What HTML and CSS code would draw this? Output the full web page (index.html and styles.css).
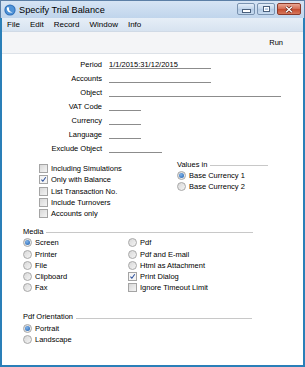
FILE: index.html
```html
<!DOCTYPE html>
<html lang="en">
<head>
    <meta charset="UTF-8">
    <meta name="viewport" content="width=device-width, initial-scale=1.0">
    <title>Specify Trial Balance</title>
    <link rel="stylesheet" href="styles.css">
</head>
<body>
<div class="window">
    <div class="titlebar">
        <svg class="app-icon" width="12" height="12" viewBox="0 0 12 12">
            <circle cx="6" cy="6" r="5.6" fill="#2f6fb8"/>
            <circle cx="6" cy="6" r="4.6" fill="#4f93d8"/>
            <path d="M3 3.2 C2.2 6.4 4.6 9.2 8.6 8.4 C6 8 4.4 6 5.2 3.6 Z" fill="#fff"/>
        </svg>
        <span class="title">Specify Trial Balance</span>
        <div class="caption-buttons">
            <span class="cbtn min"><span class="dash"></span></span>
            <span class="cbtn max"><span class="sq"></span></span>
            <span class="cbtn close">
                <svg width="8" height="7" viewBox="0 0 8 7">
                    <path d="M1 0.8 L7 6.2 M7 0.8 L1 6.2" stroke="#5a1a10" stroke-width="2.6"/>
                    <path d="M1 0.8 L7 6.2 M7 0.8 L1 6.2" stroke="#fff" stroke-width="1.5"/>
                </svg>
            </span>
        </div>
    </div>
    <div class="frame">
        <div class="menubar">
            <span>File</span><span>Edit</span><span>Record</span><span>Window</span><span>Info</span>
        </div>
        <div class="toolbar">
            <span class="run">Run</span>
        </div>
        <div class="content">
            <div class="fields">
                <span class="lbl">Period</span><span class="field w-long">1/1/2015:31/12/2015</span>
                <span class="lbl">Accounts</span><span class="field w-long"></span>
                <span class="lbl">Object</span><span class="field w-wide"></span>
                <span class="lbl">VAT Code</span><span class="field w-short"></span>
                <span class="lbl">Currency</span><span class="field w-short"></span>
                <span class="lbl">Language</span><span class="field w-short"></span>
                <span class="lbl">Exclude Object</span><span class="field w-mid"></span>
            </div>

            <div class="options">
                <div class="checks">
                    <div class="opt"><span class="box"></span>Including Simulations</div>
                    <div class="opt"><span class="box on"><svg width="9" height="9" viewBox="0 0 9 9"><path d="M1.8 4.6 L3.7 6.7 L7.4 1.6" fill="none" stroke="#2a4f9c" stroke-width="1.3"/></svg></span>Only with Balance</div>
                    <div class="opt"><span class="box"></span>List Transaction No.</div>
                    <div class="opt"><span class="box"></span>Include Turnovers</div>
                    <div class="opt"><span class="box"></span>Accounts only</div>
                </div>
                <div class="group values">
                    <div class="group-head"><span>Values in</span><span class="rule"></span></div>
                    <div class="opt"><span class="radio on"></span>Base Currency 1</div>
                    <div class="opt"><span class="radio"></span>Base Currency 2</div>
                </div>
            </div>

            <div class="group media">
                <div class="group-head"><span>Media</span><span class="rule"></span></div>
                <div class="media-cols">
                    <div class="col">
                        <div class="opt"><span class="radio on"></span>Screen</div>
                        <div class="opt"><span class="radio"></span>Printer</div>
                        <div class="opt"><span class="radio"></span>File</div>
                        <div class="opt"><span class="radio"></span>Clipboard</div>
                        <div class="opt"><span class="radio"></span>Fax</div>
                    </div>
                    <div class="col">
                        <div class="opt"><span class="radio"></span>Pdf</div>
                        <div class="opt"><span class="radio"></span>Pdf and E-mail</div>
                        <div class="opt"><span class="radio"></span>Html as Attachment</div>
                        <div class="opt"><span class="box on"><svg width="9" height="9" viewBox="0 0 9 9"><path d="M1.8 4.6 L3.7 6.7 L7.4 1.6" fill="none" stroke="#2a4f9c" stroke-width="1.3"/></svg></span>Print Dialog</div>
                        <div class="opt"><span class="box"></span>Ignore Timeout Limit</div>
                    </div>
                </div>
            </div>

            <div class="group orient">
                <div class="group-head"><span>Pdf Orientation</span><span class="rule"></span></div>
                <div class="opt"><span class="radio on"></span>Portrait</div>
                <div class="opt"><span class="radio"></span>Landscape</div>
            </div>
        </div>
    </div>
</div>
</body>
</html>
```

FILE: styles.css
```css
body {
    margin: 0;
    font-family: 'Liberation Sans', Arial, sans-serif;
    font-size: 7.5px;
    color: #000;
    background-color: #fff;
}

.window {
    width: 305px;
    height: 367px;
    display: flex;
    flex-direction: column;
    overflow: hidden;
}

/* caption */
.titlebar {
    height: 18px;
    display: flex;
    align-items: center;
    padding: 0 3px 0 3px;
    background: linear-gradient(#d6e4f4, #c0d5ec);
    border: 1px solid #5c7fa6;
    border-bottom: none;
    box-sizing: border-box;
}

.app-icon {
    margin-right: 3px;
}

.title {
    font-size: 9.2px;
    color: #000;
}

.caption-buttons {
    margin-left: auto;
    display: flex;
    gap: 2px;
    align-self: flex-start;
    margin-top: 2px;
}

.cbtn {
    height: 12px;
    display: flex;
    align-items: center;
    justify-content: center;
    border: 1px solid #7a93b0;
    border-radius: 2px;
    box-sizing: border-box;
    background: linear-gradient(#e4eef9, #c0d4ea 50%, #b4cae4 51%, #c8dcf0);
}

.cbtn.min,
.cbtn.max {
    width: 18px;
}

.cbtn.close {
    width: 24px;
    border-color: #8a3b2c;
    background: linear-gradient(#e9a793, #d46b52 50%, #c44a2e 51%, #d6785c);
}

.dash {
    width: 7px;
    height: 2px;
    background: #fff;
    border: 1px solid #4a607c;
    margin-top: 4px;
}

.sq {
    width: 5px;
    height: 4px;
    border: 1px solid #4a607c;
    box-shadow: inset 0 0 0 1px #fff;
}

/* body of window */
.frame {
    flex: 1;
    display: flex;
    flex-direction: column;
    border: solid #2a7fb8;
    border-width: 0 2px 2px 2px;
    background-color: #fff;
}

.menubar {
    height: 13px;
    display: flex;
    align-items: center;
    font-size: 8px;
    background: linear-gradient(#e6eef7, #d7e3f0);
    border-bottom: 1px solid #d0dae6;
}

.menubar span {
    padding: 0 5px;
}

.toolbar {
    height: 21px;
    display: flex;
    align-items: center;
    justify-content: flex-end;
    padding-right: 20px;
    background-color: #f4f5f7;
    border-bottom: 1px solid #dde2e8;
}

.run {
    font-size: 7.5px;
}

.content {
    flex: 1;
    padding-top: 4px;
}

/* header fields */
.fields {
    display: grid;
    grid-template-columns: 100px 1fr;
    column-gap: 7px;
    grid-auto-rows: 14px;
    line-height: 14px;
}

.lbl {
    text-align: right;
}

.field {
    height: 11px;
    box-sizing: border-box;
    border-bottom: 1px solid #8c8c8c;
    overflow: visible;
    white-space: nowrap;
}

.w-long { width: 102px; }
.w-wide { width: 172px; }
.w-short { width: 32px; }
.w-mid { width: 53px; }

/* checkboxes and radios */
.opt {
    display: flex;
    align-items: center;
    height: 11.25px;
    white-space: nowrap;
}

.box,
.radio {
    width: 9px;
    height: 9px;
    box-sizing: border-box;
    margin-right: 3px;
    flex: none;
    border: 1px solid #a4a4a4;
    background: linear-gradient(135deg, #d8d8d8, #f4f4f4);
    display: flex;
    align-items: center;
    justify-content: center;
}

.box.on {
    background: #f4f4f4;
}

.radio {
    border-radius: 50%;
    border-color: #a8a8a8;
}

.radio.on::after {
    content: "";
    width: 5px;
    height: 5px;
    border-radius: 50%;
    background: radial-gradient(circle at 40% 35%, #7fb3ea, #1f5fae);
}

.options {
    display: flex;
    align-items: flex-start;
    margin-top: 2px;
}

.checks {
    margin-left: 37px;
    margin-top: 5px;
    width: 138px;
}

.group-head {
    display: flex;
    align-items: center;
    gap: 3px;
    height: 12px;
}

.rule {
    flex: 1;
    height: 1px;
    background-color: #c8c8c8;
    margin-top: 3px;
}

.values {
    width: 91px;
}

.media {
    width: 230px;
    margin: 6px 0 0 21px;
}

.media-cols {
    display: flex;
}

.media-cols .col {
    width: 105px;
}

.orient {
    width: 229px;
    margin: 17px 0 0 21px;
}
```
